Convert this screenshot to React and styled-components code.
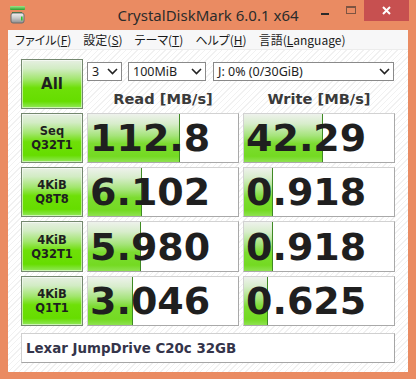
import React from "react";
import styled, { createGlobalStyle } from "styled-components";

const GlobalStyle = createGlobalStyle`
    html, body {
        margin: 0;
        padding: 0;
    }
    body {
        width: 416px;
        height: 379px;
        overflow: hidden;
    }
`;

const Window = styled.div`
    width: 416px;
    height: 379px;
    box-sizing: border-box;
    background-color: #ea8b62;
    display: flex;
    flex-direction: column;
`;

const TitleBar = styled.div`
    height: 30px;
    flex-shrink: 0;
    display: grid;
    grid-template-columns: 1fr auto 1fr;
    align-items: start;
`;

const AppIcon = styled.div`
    padding: 6px 0 0 10px;
    display: flex;
`;

const Title = styled.div`
    font-family: "Noto Sans", sans-serif;
    font-size: 15px;
    line-height: 30px;
    color: #2b2b2b;
`;

const Controls = styled.div`
    display: flex;
    justify-content: flex-end;
    padding-right: 7px;
`;

const CtrlButton = styled.div`
    width: ${props => props.w}px;
    height: 21px;
    display: flex;
    align-items: center;
    justify-content: center;
    background-color: ${props => props.close ? "#c75050" : "transparent"};
`;

const MinDash = styled.div`
    width: 8px;
    height: 2px;
    margin-top: 6px;
    background-color: #2a2a2a;
`;

const MaxBox = styled.div`
    width: 10px;
    height: 8px;
    box-sizing: border-box;
    border: 1px solid #7d5442;
    border-top-width: 2px;
    margin-top: -2px;
`;

const Client = styled.div`
    flex: 1;
    margin: 0 8px 7px 8px;
    background-color: #fff;
    display: flex;
    flex-direction: column;
`;

const MenuBar = styled.div`
    height: 20px;
    display: flex;
    align-items: center;
    background-color: #f7f7f8;
    border-bottom: 1px solid #ececec;
    box-sizing: border-box;
    padding-left: 1px;
`;

const MenuItem = styled.div`
    padding: 0 6px;
    font-family: "Noto Sans CJK JP", "Noto Sans", sans-serif;
    font-feature-settings: "palt";
    font-size: 12px;
    color: #1a1a1a;
    white-space: nowrap;

    u {
        text-decoration: underline;
        text-underline-offset: 1px;
    }
`;

const Content = styled.div`
    flex: 1;
    padding: 9px 13px 0 13px;
    background: repeating-linear-gradient(135deg, #ffffff 0px, #ffffff 3px, #f1f1f1 3px, #f1f1f1 4px);
`;

const Grid = styled.div`
    display: grid;
    grid-template-columns: 62px 152px 152px;
    grid-template-rows: 50px 50px 50px 51px 50px;
    gap: 4px;
`;

const GreenButton = styled.div`
    box-sizing: border-box;
    border: 1px solid #74886f;
    box-shadow: inset 0 0 0 1px rgba(255, 255, 255, 0.55);
    background: linear-gradient(#e6efe2 0%, #d2ecc4 18%, #a2e66e 40%, #6ee008 58%, #66dd00 86%, #92e85c 100%);
    display: flex;
    flex-direction: column;
    align-items: center;
    justify-content: center;
    font-family: "DejaVu Sans", sans-serif;
    font-weight: bold;
    font-size: ${props => props.big ? "15px" : "11.5px"};
    line-height: 14px;
    color: #1f1f1f;
    text-align: center;
`;

const TopArea = styled.div`
    grid-column: 2 / 4;
    display: flex;
    flex-direction: column;
`;

const SelectRow = styled.div`
    margin-top: 3px;
    display: flex;
    gap: 6px;
`;

const Select = styled.div`
    width: ${props => props.w}px;
    height: 19px;
    box-sizing: border-box;
    border: 1px solid #8a8a8a;
    background-color: #fff;
    display: flex;
    align-items: center;
    justify-content: space-between;
    padding: 0 3px 0 4px;
    margin-right: ${props => props.mr || 0}px;
    font-family: "Noto Sans", sans-serif;
    font-size: 12.5px;
    color: #1e1e1e;
    white-space: nowrap;
`;

const HeaderRow = styled.div`
    margin-top: 9px;
    display: grid;
    grid-template-columns: 152px 152px;
    gap: 4px;
`;

const Header = styled.div`
    text-align: center;
    font-family: "DejaVu Sans", sans-serif;
    font-weight: bold;
    font-size: 14.6px;
    line-height: 18px;
    color: #3a3a3a;
`;

const Cell = styled.div`
    box-sizing: border-box;
    border: 1px solid;
    border-color: #d2d2d2 #a9a9a9 #a9a9a9 #d2d2d2;
    background-color: #fff;
    display: grid;
    grid-template: 1fr / 1fr;
    overflow: hidden;
`;

const Bar = styled.div`
    grid-area: 1 / 1;
    height: 100%;
    box-sizing: border-box;
    border-right: 1px solid #3f8a24;
    background: linear-gradient(#eef2ec 0%, #d8edcc 20%, #a6e47c 45%, #7cdc30 62%, #74da22 88%, #8ee250 100%);
`;

const Score = styled.div`
    grid-area: 1 / 1;
    align-self: center;
    padding-left: 2px;
    font-family: "DejaVu Sans", sans-serif;
    font-weight: bold;
    font-size: 38px;
    line-height: 1;
    color: #1f1f1f;
    position: relative;
`;

const Comment = styled.div`
    margin-top: 7px;
    height: 30px;
    box-sizing: border-box;
    border: 1px solid;
    border-color: #d0d0d0 #a6a6a6 #a6a6a6 #d0d0d0;
    background-color: #fff;
    display: flex;
    align-items: center;
    padding-left: 4px;
    font-family: "DejaVu Sans", sans-serif;
    font-weight: bold;
    font-size: 13.4px;
    color: #34344a;
`;

const Chevron = () => (
    <svg width="11" height="7" viewBox="0 0 11 7">
        <polyline points="1,1 5.5,5.5 10,1" fill="none" stroke="#222" strokeWidth="1.6" />
    </svg>
);

const DiskIcon = () => (
    <svg width="16" height="18" viewBox="0 0 16 18">
        <defs>
            <linearGradient id="gbar" x1="0" y1="0" x2="0" y2="1">
                <stop offset="0" stopColor="#9fe889" />
                <stop offset="1" stopColor="#2d9e2d" />
            </linearGradient>
            <linearGradient id="gbody" x1="0" y1="0" x2="0" y2="1">
                <stop offset="0" stopColor="#f2f2f2" />
                <stop offset="0.5" stopColor="#c9c9c9" />
                <stop offset="1" stopColor="#8d8d8d" />
            </linearGradient>
        </defs>
        <rect x="0" y="0" width="15" height="4" rx="1" fill="url(#gbar)" />
        <rect x="2" y="6" width="10" height="1" fill="#2f7f2f" />
        <rect x="1" y="7" width="13" height="10" rx="2" fill="url(#gbody)" stroke="#6c6c6c" strokeWidth="1" />
        <rect x="11" y="10.5" width="1.6" height="4" fill="#2fc42f" />
    </svg>
);

const CloseX = () => (
    <svg width="9" height="9" viewBox="0 0 9 9">
        <path d="M1 1 L8 8 M8 1 L1 8" stroke="#fff" strokeWidth="2" />
    </svg>
);

const rows = [
    { label: ["Seq", "Q32T1"], read: "112.8", write: "42.29" },
    { label: ["4KiB", "Q8T8"], read: "6.102", write: "0.918" },
    { label: ["4KiB", "Q32T1"], read: "5.980", write: "0.918" },
    { label: ["4KiB", "Q1T1"], read: "3.046", write: "0.625" },
];

// bar length on a log scale, like the original
const barWidth = value => {
    const v = Math.log10(parseFloat(value) * 10) / 5;
    return Math.max(0, Math.min(1, v)) * 150;
};

function ScoreCell({ value }) {
    return (
        <Cell>
            <Bar style={{ width: `${barWidth(value)}px` }} />
            <Score>{value}</Score>
        </Cell>
    );
}

export default function App() {
    return (
        <>
            <GlobalStyle />
            <Window>
                <TitleBar>
                    <AppIcon><DiskIcon /></AppIcon>
                    <Title>CrystalDiskMark 6.0.1 x64</Title>
                    <Controls>
                        <CtrlButton w={27}><MinDash /></CtrlButton>
                        <CtrlButton w={26}><MaxBox /></CtrlButton>
                        <CtrlButton w={45} close><CloseX /></CtrlButton>
                    </Controls>
                </TitleBar>
                <Client>
                    <MenuBar>
                        <MenuItem>ファイル(<u>F</u>)</MenuItem>
                        <MenuItem>設定(<u>S</u>)</MenuItem>
                        <MenuItem>テーマ(<u>T</u>)</MenuItem>
                        <MenuItem>ヘルプ(<u>H</u>)</MenuItem>
                        <MenuItem>言語(<u>L</u>anguage)</MenuItem>
                    </MenuBar>
                    <Content>
                        <Grid>
                            <GreenButton big>All</GreenButton>
                            <TopArea>
                                <SelectRow>
                                    <Select w={35}>3<Chevron /></Select>
                                    <Select w={78} mr={1}>100MiB<Chevron /></Select>
                                    <Select w={181}>J: 0% (0/30GiB)<Chevron /></Select>
                                </SelectRow>
                                <HeaderRow>
                                    <Header>Read [MB/s]</Header>
                                    <Header>Write [MB/s]</Header>
                                </HeaderRow>
                            </TopArea>
                            {rows.map(r => (
                                <React.Fragment key={r.label.join("")}>
                                    <GreenButton>
                                        <span>{r.label[0]}</span>
                                        <span>{r.label[1]}</span>
                                    </GreenButton>
                                    <ScoreCell value={r.read} />
                                    <ScoreCell value={r.write} />
                                </React.Fragment>
                            ))}
                        </Grid>
                        <Comment>Lexar JumpDrive C20c 32GB</Comment>
                    </Content>
                </Client>
            </Window>
        </>
    );
}
